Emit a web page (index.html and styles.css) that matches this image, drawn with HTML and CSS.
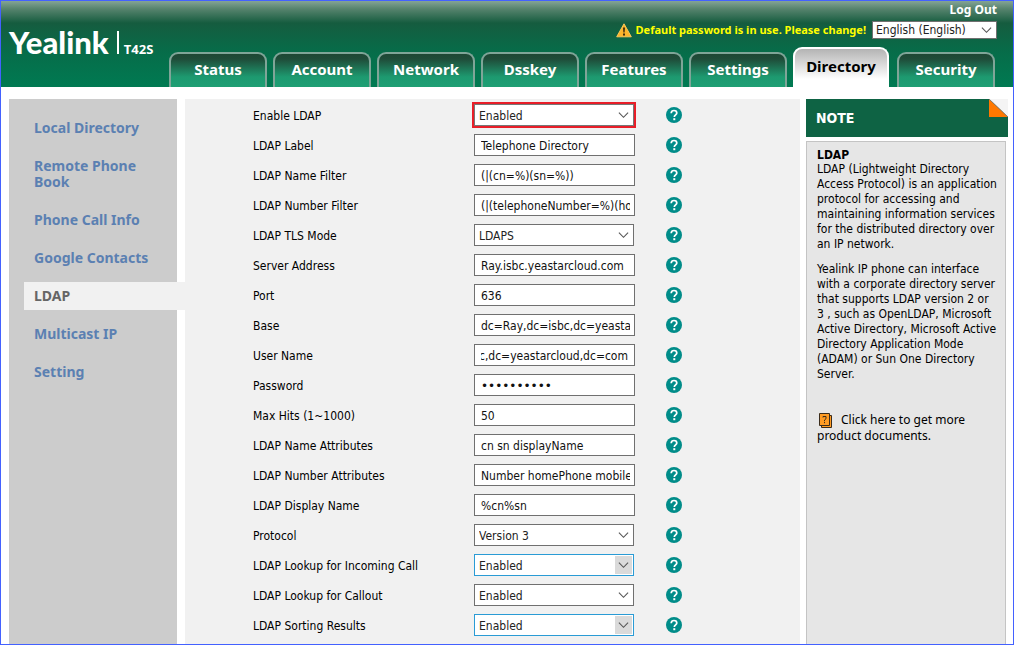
FILE: index.html
```html
<!DOCTYPE html>
<html lang="en">
<head>
<meta charset="utf-8">
<title>Yealink T42S - Directory</title>
<link rel="stylesheet" href="styles.css">
</head>
<body>
<svg class="defs" width="0" height="0" aria-hidden="true">
  <symbol id="chevron" viewBox="0 0 12 8"><path d="M1 1.5 6 6.5 11 1.5" fill="none" stroke="#555" stroke-width="1.2"/></symbol>
  <symbol id="help" viewBox="0 0 16 16"><circle cx="8" cy="8" r="8" fill="#008c89"/><path d="M5.2 6.3C5.2 4.5 6.3 3.5 8 3.5s2.8 1 2.8 2.5c0 1.900-2.500 1.900-2.500 4" fill="none" stroke="#fff" stroke-width="1.700"/><rect x="7.300" y="11.200" width="2" height="2" fill="#fff"/></symbol>
</svg>
<div class="page">
  <header class="header">
    <div class="brand"><span class="logo">Yealink</span><span class="model">T42S</span></div>
    <div class="header-right">
      <div class="logout-row"><a href="#">Log Out</a></div>
      <div class="alert-row">
        <svg class="warn" width="16" height="15" viewBox="0 0 16 15" aria-hidden="true"><path d="M8 .8 15.300 13.800H.7Z" fill="#fdb52b" stroke="#f9c65a" stroke-linejoin="round"/><path d="M7 4.500h2L8.600 9.500H7.400Z" fill="#3b2a10"/><rect x="7" y="10.500" width="2" height="2" fill="#3b2a10"/></svg>
        <a class="alert" href="#">Default password is in use. Please change!</a>
        <span class="select lang"><select aria-label="Language"><option>English (English)</option></select><svg class="chevron"><use href="#chevron"/></svg></span>
      </div>
      <nav class="tabs">
        <a href="#">Status</a><a href="#">Account</a><a href="#">Network</a><a href="#">Dsskey</a><a href="#">Features</a><a href="#">Settings</a><a class="active" href="#">Directory</a><a href="#">Security</a>
      </nav>
    </div>
  </header>
  <div class="content">
    <nav class="sidebar">
      <a href="#">Local Directory</a>
      <a href="#">Remote Phone Book</a>
      <a href="#">Phone Call Info</a>
      <a href="#">Google Contacts</a>
      <a class="active" href="#">LDAP</a>
      <a href="#">Multicast IP</a>
      <a href="#">Setting</a>
    </nav>
    <main class="main">
      <form>
        <div class="row"><label for="f1">Enable LDAP</label><span class="select marked"><select id="f1"><option>Enabled</option></select><svg class="chevron"><use href="#chevron"/></svg></span><svg class="help"><use href="#help"/></svg></div>
        <div class="row"><label for="f2">LDAP Label</label><input id="f2" type="text" value="Telephone Directory"><svg class="help"><use href="#help"/></svg></div>
        <div class="row"><label for="f3">LDAP Name Filter</label><input id="f3" type="text" value="(|(cn=%)(sn=%))"><svg class="help"><use href="#help"/></svg></div>
        <div class="row"><label for="f4">LDAP Number Filter</label><input id="f4" type="text" value="(|(telephoneNumber=%)(homePhone=%))"><svg class="help"><use href="#help"/></svg></div>
        <div class="row"><label for="f5">LDAP TLS Mode</label><span class="select"><select id="f5"><option>LDAPS</option></select><svg class="chevron"><use href="#chevron"/></svg></span><svg class="help"><use href="#help"/></svg></div>
        <div class="row"><label for="f6">Server Address</label><input id="f6" type="text" value="Ray.isbc.yeastarcloud.com"><svg class="help"><use href="#help"/></svg></div>
        <div class="row"><label for="f7">Port</label><input id="f7" type="text" value="636"><svg class="help"><use href="#help"/></svg></div>
        <div class="row"><label for="f8">Base</label><input id="f8" type="text" value="dc=Ray,dc=isbc,dc=yeastarcloud,dc=com"><svg class="help"><use href="#help"/></svg></div>
        <div class="row"><label for="f9">User Name</label><input id="f9" class="show-end" type="text" value="dc=isbc,dc=yeastarcloud,dc=com"><svg class="help"><use href="#help"/></svg></div>
        <div class="row"><label for="f10">Password</label><input id="f10" type="password" value="0000000000"><svg class="help"><use href="#help"/></svg></div>
        <div class="row"><label for="f11">Max Hits (1~1000)</label><input id="f11" type="text" value="50"><svg class="help"><use href="#help"/></svg></div>
        <div class="row"><label for="f12">LDAP Name Attributes</label><input id="f12" type="text" value="cn sn displayName"><svg class="help"><use href="#help"/></svg></div>
        <div class="row"><label for="f13">LDAP Number Attributes</label><input id="f13" type="text" value="Number homePhone mobile"><svg class="help"><use href="#help"/></svg></div>
        <div class="row"><label for="f14">LDAP Display Name</label><input id="f14" type="text" value="%cn%sn"><svg class="help"><use href="#help"/></svg></div>
        <div class="row"><label for="f15">Protocol</label><span class="select"><select id="f15"><option>Version 3</option></select><svg class="chevron"><use href="#chevron"/></svg></span><svg class="help"><use href="#help"/></svg></div>
        <div class="row"><label for="f16">LDAP Lookup for Incoming Call</label><span class="select changed"><select id="f16"><option>Enabled</option></select><svg class="chevron"><use href="#chevron"/></svg></span><svg class="help"><use href="#help"/></svg></div>
        <div class="row"><label for="f17">LDAP Lookup for Callout</label><span class="select"><select id="f17"><option>Enabled</option></select><svg class="chevron"><use href="#chevron"/></svg></span><svg class="help"><use href="#help"/></svg></div>
        <div class="row"><label for="f18">LDAP Sorting Results</label><span class="select changed"><select id="f18"><option>Enabled</option></select><svg class="chevron"><use href="#chevron"/></svg></span><svg class="help"><use href="#help"/></svg></div>
      </form>
    </main>
    <aside class="note">
      <h2>NOTE<svg class="fold" width="19" height="18" viewBox="0 0 19 18" aria-hidden="true"><path d="M0 0H19V18Z" fill="#f4f4f4"/><path d="M0 0 19 18H0Z" fill="#ff7800"/><path d="M0 0 19 18" stroke="#777" stroke-width=".8"/></svg></h2>
      <div class="note-body">
        <h3>LDAP</h3>
        <p>LDAP (Lightweight Directory Access Protocol) is an application protocol for accessing and maintaining information services for the distributed directory over an IP network.</p>
        <p>Yealink IP phone can interface with a corporate directory server that supports LDAP version 2 or 3 , such as OpenLDAP, Microsoft Active Directory, Microsoft Active Directory Application Mode (ADAM) or Sun One Directory Server.</p>
        <a class="docs" href="#"><svg width="14" height="15" viewBox="0 0 14 15" aria-hidden="true"><path d="M2.500 2.500h10v12h-10z" fill="#ff9c24" stroke="#3a2c1c"/><path d="M.5.5h10v12H.5z" fill="#ff9c24" stroke="#3a2c1c"/><path d="M4 4.500V3.500h3v2.200L5.500 7v1.200M5.500 9v1.200" fill="none" stroke="#3a2c1c"/></svg>Click here to get more product documents.</a>
      </div>
    </aside>
  </div>
</div>
</body>
</html>
```

FILE: styles.css
```css
* { box-sizing: border-box; }

body {
  margin: 0;
  background: #fff;
  color: #000;
  font: 12px/15px "DejaVu Sans Condensed", "Noto Sans", sans-serif;
}

a { color: inherit; text-decoration: none; }

.defs { display: block; }

.page {
  display: flex;
  flex-direction: column;
  min-height: 100vh;
  border: 1px solid #4361ff;
}

.header {
  display: flex;
  justify-content: space-between;
  padding: 0 16px 0 8px;
  background: linear-gradient(#84a495 0, #56836d 8px, #155c3f 22px, #076c49 50px, #007a52 86px);
  color: #fff;
}

.brand {
  display: flex;
  align-items: flex-end;
  gap: 5px;
  height: 53px;
}

.logo {
  padding-right: 8px;
  border-right: 2px solid #fff;
  font: 900 31px/23px Lato, sans-serif;
}

.model { font: bold 13px/10px "Noto Sans", sans-serif; }

.header-right { display: flex; flex-direction: column; }

.logout-row {
  height: 18px;
  text-align: right;
  font: bold 12px/17px "Noto Sans", sans-serif;
}

.alert-row {
  display: flex;
  align-items: center;
  justify-content: flex-end;
  height: 22px;
}

.warn { margin-right: 4px; }

.alert {
  margin-right: 6px;
  padding-bottom: 2px;
  color: #ffff00;
  font: bold 11px/15px "Noto Sans", sans-serif;
}

.tabs {
  display: flex;
  align-items: flex-end;
  gap: 6px;
  height: 46px;
  margin-right: 2px;
}

.tabs a {
  width: 98px;
  height: 35px;
  border: 2px solid #7fa598;
  border-bottom: 0;
  border-radius: 9px 9px 0 0;
  background: linear-gradient(#1d4734 0, #1f4c39 5px, #1d9a70 23px, #1f9f74 100%);
  font: bold 15px/30px "Noto Sans", sans-serif;
  text-align: center;
}

.tabs .active {
  width: 96px;
  height: 40px;
  margin-right: 2px;
  border-color: #fff;
  background: linear-gradient(#b4b4b4, #fff 30px);
  color: #000;
  line-height: 34px;
}

.content {
  display: flex;
  flex: 1;
  padding: 12px 5px 0 8px;
}

.sidebar {
  width: 168px;
  margin-right: 8px;
  padding: 15px 0 0 15px;
  background: #ccc;
  color: #5b80b2;
  font: bold 14px/16px "Noto Sans", sans-serif;
}

.sidebar a {
  display: block;
  margin-bottom: 10px;
  padding: 6px 24px 6px 10px;
}

.sidebar .active {
  margin-right: -8px;
  background: #f1f1f1;
  color: #666;
}

.main {
  flex: 1;
  padding: 1px 0 4px 68px;
  background: #f1f1f1;
}

.row {
  display: flex;
  align-items: center;
  height: 30px;
}

.row label { width: 221px; padding-top: 2px; }

.row input {
  width: 161px;
  height: 22px;
  padding: 2px 4px 0 6px;
  border: 1px solid #707070;
  background: #fff;
  color: #111;
  font: inherit;
}

.row .show-end { direction: rtl; padding-right: 6px; }

.row input[type="password"] { font-family: "DejaVu Sans", sans-serif; }

.select {
  position: relative;
  width: 160px;
  height: 22px;
}

.select select {
  display: block;
  width: 100%;
  height: 100%;
  padding: 2px 20px 0 4px;
  border: 1px solid #707070;
  border-radius: 0;
  background: #fff;
  color: #222;
  font: inherit;
  appearance: none;
}

.chevron {
  position: absolute;
  top: 2px;
  right: 2px;
  width: 17px;
  height: 18px;
  padding: 5px 3px;
  pointer-events: none;
}

.marked { outline: 2px solid #e81e28; }

.marked select { border-color: #777; }

.changed select { border-color: #2a9bd5; }

.changed .chevron { background: #dadada; }

.lang { width: 125px; height: 18px; }

.lang select { padding: 0 20px 0 3px; }

.lang .chevron { top: 0; }

.help {
  width: 16px;
  height: 16px;
  margin-left: auto;
  margin-right: 118px;
}

.note {
  display: flex;
  flex-direction: column;
  width: 202px;
  margin-left: 6px;
}

.note h2 {
  position: relative;
  margin: 0 0 4px;
  padding-left: 10px;
  background: #0e6344;
  color: #fff;
  font-size: 14px;
  line-height: 38px;
}

.fold { position: absolute; top: 0; right: 0; }

.note-body {
  flex: 1;
  margin-right: 2px;
  padding: 6px 8px 0 10px;
  border: 1px solid #c4c4c4;
  border-bottom: 0;
  background: #e6e6e6;
}

.note h3 { margin: 0; font-size: 12px; line-height: 14px; }

.note p { margin: 0 0 10px; }

.docs {
  display: block;
  margin-top: 30px;
  font-family: "Noto Sans", sans-serif;
  line-height: 16px;
}

.docs svg { margin: 0 8px 0 2px; vertical-align: middle; }
```
